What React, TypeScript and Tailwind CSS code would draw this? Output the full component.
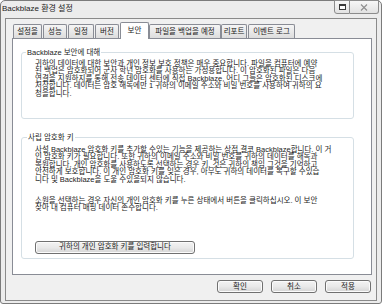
import React from "react";

const tabs: { label: string; cls: string; selected?: boolean }[] = [
  { label: "설정을", cls: "w-[29px]" },
  { label: "성능", cls: "w-[24px] ml-[1px]" },
  { label: "일정", cls: "w-[26px] ml-[1px]" },
  { label: "버전", cls: "w-[24px] ml-[1px]" },
  { label: "보안", cls: "w-[29px] ml-[1px]", selected: true },
  { label: "파일을 백업을 예정", cls: "w-[72px]" },
  { label: "리포트", cls: "w-[26px]" },
  { label: "이벤트 로그", cls: "w-[47px] ml-[1px]" },
];

const para1 = [
  "귀하의 데이터에 대한 보안과 개인 정보 보호 정책은 매우 중요합니다. 파일을 컴퓨터에 예약",
  "된 백업은 암호화되어 군사 학년 암호화를 사용하는 가정용합니다. 이 암호화된 파일은 다음",
  "연결을 지원하지를 통해 전송 데이터 센터에 직접 Backblaze, 어디 그들은 암호화된 디스크에",
  "저장합니다. 데이터는 암호 해독에만 1 귀하의 이메일 주소와 비밀 번호를 사용하여 귀하의 요",
  "청을합니다.",
];

const para2 = [
  "사설 Backblaze 암호화 키를 추가할 수있는 기능을 제공하는 상점 결코 Backblaze합니다. 이 거",
  "인 암호화 키가 필요합니다. 또한 귀하의 이메일 주소와 비밀 번호를 귀하의 데이터를 해독과",
  "복원합니다. 개인 암호화를 사용하도록 선택하는 경우 키, 것은 귀하의 책임 그것을 기억하고",
  "안전하게 보호합니다. 이 개인 암호화 키를 잊은 경우, 아무도 귀하의 데이터를 복구할 수있습",
  "니다 및 Backblaze을 도울 수있을되지 않습니다.",
];

const para3 = [
  "소원을 선택하는 경우 자신의 개인 암호화 키를 누른 상태에서 버튼을 클릭하십시오. 이 보안",
  "찾아 내 컴퓨터 매핑 데이터 존수합니다.",
];

function Lines({ lines }: { lines: string[] }) {
  return (
    <div className="leading-[7.4px]">
      {lines.map((l, i) => (
        <div key={i} className="whitespace-nowrap h-[7.4px]">
          {l}
        </div>
      ))}
    </div>
  );
}

function WinButton({ label, cls }: { label: string; cls: string }) {
  return (
    <div
      className={`h-[13px] border border-[#707070] rounded-[3px] bg-linear-to-b from-[#f3f3f3] via-[#e9e9e9] to-[#d4d4d4] shadow-[inset_0_0_0_1px_#fbfbfb] flex items-center justify-center text-[7.5px] leading-none ${cls}`}
    >
      {label}
    </div>
  );
}

export default function App() {
  return (
    <div className="w-[383px] h-[306px] bg-white [font-family:'Liberation_Sans','Noto_Sans_CJK_KR',sans-serif] text-[#1c1c1c]">
      <div className="w-[382px] h-[304px] border border-[#7b7b7b] rounded-t-[5px] rounded-b-[3px] bg-[#ececec] flex flex-col">
        {/* title bar */}
        <div className="h-[17px] flex items-start shrink-0">
          <div className="pl-[1px] pt-[3px] text-[8px] leading-[10px] text-[#222] whitespace-nowrap">
            Backblaze 환경 설정
          </div>
          <div className="ml-auto mr-[2px] -mt-px flex">
            <div className="w-[16px] h-[14px] border border-[#8c8c8c] rounded-bl-[3px] bg-linear-to-b from-[#f7f7f7] to-[#e2e2e2] flex items-center justify-center">
              <div className="w-[7px] h-[6px] border border-[#3a3a3a] border-t-2 bg-[#fdfdfd]" />
            </div>
            <div className="w-[29px] h-[14px] border border-l-0 border-[#8c8c8c] rounded-br-[3px] bg-linear-to-b from-[#f7f7f7] to-[#e2e2e2] flex items-center justify-center">
              <svg width="8" height="7" viewBox="0 0 8 7">
                <path d="M1 0.5 L7 6.5 M7 0.5 L1 6.5" stroke="#8e8e8e" strokeWidth="1.1" fill="none" />
              </svg>
            </div>
          </div>
        </div>

        {/* client area */}
        <div className="mx-[4px] mb-[2px] flex-1 border border-[#8a8a8a] bg-[#f0f0f0] flex flex-col text-[7.5px]">
          {/* tabs */}
          <div className="flex items-end h-[16px] ml-[7px] mt-[3px]">
            {tabs.map((t) =>
              t.selected ? (
                <div
                  key={t.label}
                  className={`relative z-10 -mb-px h-[17px] bg-white border border-b-0 border-[#898c95] rounded-t-[2px] flex items-center justify-center whitespace-nowrap leading-none ${t.cls}`}
                >
                  {t.label}
                </div>
              ) : (
                <div
                  key={t.label}
                  className={`h-[14px] border border-b-0 border-[#898c95] rounded-t-[2px] bg-linear-to-b from-[#f5f5f5] to-[#dddddd] flex items-center justify-center whitespace-nowrap leading-none ${t.cls}`}
                >
                  {t.label}
                </div>
              )
            )}
          </div>

          {/* panel */}
          <div className="ml-[6px] w-[360px] h-[237px] border border-[#898c95] bg-white flex flex-col">
            {/* group 1 */}
            <div className="relative ml-[8px] mt-[13px] w-[333px] h-[67px] border border-[#d5dfe5] rounded-[3px] pl-[13px] pt-[7px]">
              <div className="absolute -top-[5px] left-[4px] px-[1px] bg-white leading-[9px] whitespace-nowrap">
                Backblaze 보안에 대해
              </div>
              <Lines lines={para1} />
            </div>

            {/* group 2 */}
            <div className="relative ml-[8px] mt-[18px] w-[333px] h-[122px] border border-[#d5dfe5] rounded-[3px] pl-[13px] pt-[8px]">
              <div className="absolute -top-[5px] left-[5px] px-[1px] bg-white leading-[9px] whitespace-nowrap">
                사립 암호화 키
              </div>
              <Lines lines={para2} />
              <div className="mt-[14px]">
                <Lines lines={para3} />
              </div>
              <div className="mt-[29px]">
                <WinButton label="귀하의 개인 암호화 키를 입력합니다" cls="w-[160px]" />
              </div>
            </div>
          </div>

          {/* bottom buttons */}
          <div className="mt-[5px] flex justify-end gap-[8px] pr-[5px]">
            <WinButton label="확인" cls="w-[46px]" />
            <WinButton label="취소" cls="w-[46px]" />
            <WinButton label="적용" cls="w-[46px]" />
          </div>
        </div>
      </div>
    </div>
  );
}
